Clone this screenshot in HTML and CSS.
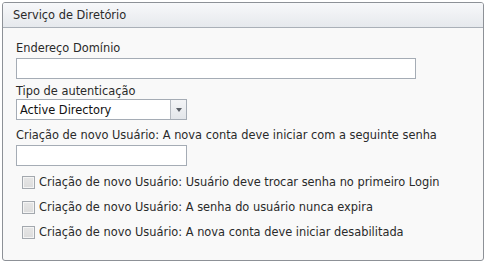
FILE: index.html
```html
<!DOCTYPE html>
<html>
<head>
<meta charset="utf-8">
<link rel="stylesheet" href="styles.css">
</head>
<body>
<div class="panel">
  <div class="panel-header">Serviço de Diretório</div>
  <div class="panel-body">
    <div class="label l1">Endereço Domínio</div>
    <div class="input wide"></div>
    <div class="label l2">Tipo de autenticação</div>
    <div class="select">
      <div class="select-value">Active Directory</div>
      <div class="select-btn"><span class="arrow"></span></div>
    </div>
    <div class="label l3">Criação de novo Usuário: A nova conta deve iniciar com a seguinte senha</div>
    <div class="input short"></div>
    <div class="checks">
      <div class="check-row"><span class="checkbox"></span><span class="check-label">Criação de novo Usuário: Usuário deve trocar senha no primeiro Login</span></div>
      <div class="check-row"><span class="checkbox"></span><span class="check-label">Criação de novo Usuário: A senha do usuário nunca expira</span></div>
      <div class="check-row"><span class="checkbox"></span><span class="check-label">Criação de novo Usuário: A nova conta deve iniciar desabilitada</span></div>
    </div>
  </div>
</div>
</body>
</html>
```
FILE: styles.css
```css
html, body {
  margin: 0;
  padding: 0;
  background: #ffffff;
}
body {
  padding: 2px 0 0 2px;
  font-family: "DejaVu Sans", Verdana, sans-serif;
  font-size: 11.4px;
  color: #2a2a2a;
}
.panel {
  width: 480px;
  height: 257px;
  border: 1px solid #8d9197;
  border-radius: 3px;
  background: #f9f9f9;
  display: flex;
  flex-direction: column;
  overflow: hidden;
}
.panel-header {
  height: 24px;
  line-height: 25px;
  padding-left: 10px;
  border-bottom: 1px solid #aab0b8;
  background: linear-gradient(#f7f8fa, #e6e9ed);
  color: #2a2a2a;
}
.panel-body {
  padding: 13px 0 0 13px;
  display: flex;
  flex-direction: column;
  align-items: flex-start;
}
.label {
  line-height: 14px;
  height: 14px;
  white-space: nowrap;
}
.l1 { margin-bottom: 3px; }
.l2 { margin-top: 5px; margin-bottom: 1px; }
.l3 { margin-top: 8px; margin-bottom: 3px; }
.input {
  height: 19px;
  border: 1px solid #a5acb5;
  background: #ffffff;
  box-sizing: content-box;
}
.wide { width: 398px; }
.short { width: 169px; }
.select {
  display: flex;
  width: 169px;
  height: 19px;
  border: 1px solid #a5acb5;
  background: #ffffff;
}
.select-value {
  flex: 1;
  line-height: 20px;
  padding-left: 3px;
  color: #111;
}
.select-btn {
  width: 15px;
  border-left: 1px solid #b5bac1;
  background: linear-gradient(#f3f4f6, #e3e6ea);
  display: flex;
  align-items: center;
  justify-content: center;
}
.arrow {
  width: 0;
  height: 0;
  border-left: 3.5px solid transparent;
  border-right: 3.5px solid transparent;
  border-top: 4px solid #5a5f66;
}
.checks {
  margin-top: 6px;
  display: flex;
  flex-direction: column;
  gap: 5px;
}
.check-row {
  height: 20px;
  display: flex;
  align-items: center;
  padding-left: 6px;
}
.checkbox {
  width: 11px;
  height: 11px;
  border: 1px solid #a3a8ae;
  background: linear-gradient(#e6e6e6, #dcdcdc);
  box-shadow: inset 0 0 0 1px #f4f4f4;
  margin-right: 4px;
}
.check-label {
  white-space: nowrap;
  line-height: 14px;
}
```
